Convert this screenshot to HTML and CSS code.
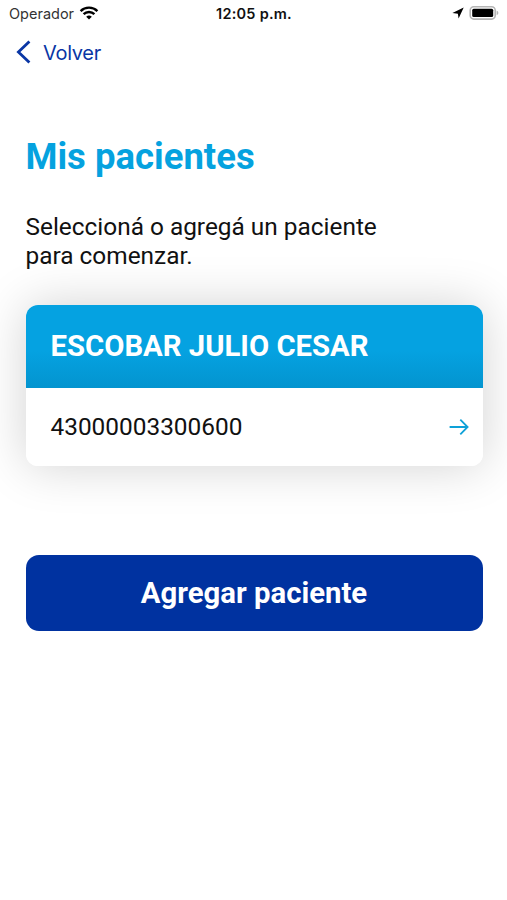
FILE: index.html
```
<!DOCTYPE html>
<html lang="es">
<head>
  <meta charset="UTF-8" />
  <meta name="viewport" content="width=device-width, initial-scale=1.0"/>
  <title>Mis pacientes</title>
  <link rel="stylesheet" href="styles.css">
</head>
<body>
  <div class="statusbar">
    <div class="carrier">
      <span>Operador</span>
      <svg class="wifi" width="20" height="14" viewBox="0 0 20 14">
        <path d="M1.6 5.1 A12 12 0 0 1 18.4 5.1" />
        <path d="M4.6 8.2 A7.7 7.7 0 0 1 15.4 8.2" />
        <path class="dot" d="M10 13.6 L7.2 10.8 A4 4 0 0 1 12.8 10.8 Z" />
      </svg>
    </div>
    <div class="time">12:05 p.m.</div>
    <div class="indicators">
      <svg width="12" height="12" viewBox="0 0 12 12">
        <path d="M11.7 0.4 L6.6 11.4 L5.9 6.7 L0.4 6.1 Z" />
      </svg>
      <svg width="30" height="16" viewBox="0 0 30 16">
        <rect class="battery" x="1.2" y="1.7" width="25" height="12.4" rx="3.6" />
        <rect x="3.2" y="3.7" width="21" height="8.4" rx="1.5" />
        <path class="tip" d="M27.6 5.6 Q29.4 6.4 29.4 7.9 Q29.4 9.4 27.6 10.2 Z" />
      </svg>
    </div>
  </div>

  <a class="back">
    <svg width="16" height="24" viewBox="0 0 16 24">
      <path d="M13.4 1.4 L2.4 12 L13.4 22.6" />
    </svg>
    <span>Volver</span>
  </a>

  <div class="main">
    <h1>Mis pacientes</h1>
    <p>Seleccioná o agregá un paciente<br>para comenzar.</p>

    <div class="card">
      <div class="card-header">ESCOBAR JULIO CESAR</div>
      <div class="card-body">
        <span>43000003300600</span>
        <svg width="20" height="18" viewBox="0 0 20 18">
          <path d="M0.6 9 H18.6 M11.3 1.6 L18.6 9 L11.3 16.4" />
        </svg>
      </div>
    </div>

    <button type="button">Agregar paciente</button>
  </div>
</body>
</html>
```
FILE: styles.css
```
body {
  font-family: Roboto, sans-serif;
  margin: 0;
  background-color: #fff;
  color: #111;
  min-height: 100vh;
}

.statusbar {
  display: grid;
  grid-template-columns: 1fr auto 1fr;
  align-items: center;
  height: 26px;
  padding: 0 8px 0 9px;
  font-family: Inter, sans-serif;
  font-size: 14.5px;
}

.carrier {
  display: flex;
  align-items: center;
  gap: 5px;
  color: #333;
}

.wifi {
  fill: none;
  stroke: #000;
  stroke-width: 2.4;
}

.wifi .dot {
  fill: #000;
  stroke: none;
}

.time {
  font-weight: 600;
  letter-spacing: 0.25px;
}

.indicators {
  display: flex;
  align-items: center;
  justify-content: flex-end;
  gap: 5px;
}

.battery {
  fill: none;
  stroke: #b5b5b5;
  stroke-width: 1.6;
}

.tip {
  fill: #b5b5b5;
}

.back {
  display: flex;
  align-items: center;
  gap: 11px;
  height: 52px;
  padding-left: 16px;
  font-family: Inter, sans-serif;
  font-size: 20px;
  letter-spacing: -0.3px;
  color: #0a36a5;
}

.back span {
  padding-top: 1px;
}

.back svg {
  fill: none;
  stroke: #0a36a5;
  stroke-width: 2.8;
}

.main {
  padding: 58px 24.5px 0 25.5px;
}

h1 {
  margin: 0;
  font-size: 36.5px;
  line-height: 42px;
  color: #05a2df;
}

p {
  margin: 34px 0 0;
  font-size: 24.4px;
  line-height: 29px;
}

.card {
  margin-top: 34.5px;
  border-radius: 12px;
  overflow: hidden;
  box-shadow: 0 0 49px rgba(0, 0, 0, 0.18);
}

.card-header {
  padding: 0 25px;
  font-size: 29.3px;
  font-weight: 700;
  line-height: 83px;
  color: #fff;
  background: linear-gradient(#05a2e1 55%, #0394cf);
}

.card-body {
  display: flex;
  align-items: center;
  justify-content: space-between;
  height: 78px;
  padding: 0 14px 0 25px;
  font-size: 24.4px;
  background-color: #fff;
}

.card-body svg {
  fill: none;
  stroke: #0ea1d8;
  stroke-width: 1.8;
}

button {
  display: block;
  width: 100%;
  height: 76px;
  margin-top: 89px;
  border: none;
  border-radius: 13px;
  font-family: Roboto, sans-serif;
  font-size: 29.3px;
  font-weight: 700;
  color: #fff;
  background-color: #0032a0;
}
```
